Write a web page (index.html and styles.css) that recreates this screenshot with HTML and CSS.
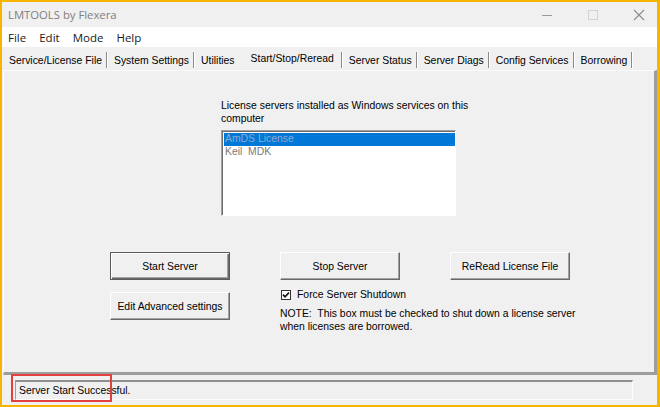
FILE: index.html
```html
<!DOCTYPE html>
<html>
<head>
<meta charset="utf-8">
<title>LMTOOLS by Flexera</title>
<link rel="stylesheet" href="styles.css">
</head>
<body>
<div class="window">
  <div class="titlebar">
    <span class="title">LMTOOLS by Flexera</span>
    <div class="winctl">
      <span class="ctl"><svg width="12" height="12" viewBox="0 0 12 12"><path d="M1 6.5H11" stroke="#9a9a9a" stroke-width="1"/></svg></span>
      <span class="ctl"><svg width="12" height="12" viewBox="0 0 12 12"><rect x="1.5" y="1.5" width="9" height="9" fill="none" stroke="#d2d2d2" stroke-width="1"/></svg></span>
      <span class="ctl"><svg width="12" height="12" viewBox="0 0 12 12"><path d="M1 1L11 11M11 1L1 11" stroke="#8c8c8c" stroke-width="1.1"/></svg></span>
    </div>
  </div>
  <div class="menubar">
    <span>File</span><span>Edit</span><span>Mode</span><span>Help</span>
  </div>
  <div class="tabs">
    <span class="tab">Service/License File</span>
    <span class="tab">System Settings</span>
    <span class="tab nosep">Utilities</span>
    <span class="tab active">Start/Stop/Reread</span>
    <span class="tab">Server Status</span>
    <span class="tab">Server Diags</span>
    <span class="tab">Config Services</span>
    <span class="tab">Borrowing</span>
  </div>
  <div class="panel">
    <div class="list-section">
      <p class="label">License servers installed as Windows services on this<br>computer</p>
      <div class="listbox">
        <div class="item selected">AmDS License</div>
        <div class="item">Keil&nbsp; MDK</div>
      </div>
    </div>
    <div class="actions">
      <button class="btn default">Start Server</button>
      <button class="btn">Stop Server</button>
      <button class="btn">ReRead License File</button>
      <button class="btn edit">Edit Advanced settings</button>
      <div class="force">
        <div class="check">
          <span class="box"><svg width="10" height="10" viewBox="0 0 10 10"><path d="M2 4.6L4 6.8L8 2.6" fill="none" stroke="#111" stroke-width="1.6"/></svg></span>
          <span>Force Server Shutdown</span>
        </div>
        <p class="note">NOTE:&nbsp; This box must be checked to shut down a license server<br>when licenses are borrowed.</p>
      </div>
    </div>
  </div>
  <div class="statusbar">
    <div class="status">Server Start Successful.</div>
    <div class="highlight"></div>
  </div>
</div>
</body>
</html>
```
FILE: styles.css
```css
* { box-sizing: border-box; margin: 0; padding: 0; }
html, body { width: 660px; height: 407px; overflow: hidden; background: #f0f0f0; }
.window {
  width: 660px; height: 407px;
  border: solid #f7b500; border-width: 2px 3px 2px 2px;
  display: flex; flex-direction: column;
  background: #f0f0f0;
  font-family: "Liberation Sans", Arial, sans-serif;
  font-size: 10.4px; color: #000;
}
.titlebar { height: 25px; flex: none; display: flex; align-items: center; padding-left: 6px; background: #f0f0f0; }
.title { font-family: "Open Sans", "Noto Sans", sans-serif; font-size: 11.3px; color: #7f7f7f; }
.winctl { margin-left: auto; display: flex; gap: 22px; padding-right: 6px; align-items: center; }
.ctl { width: 24px; height: 24px; display: flex; align-items: center; justify-content: center; }
.menubar {
  height: 20px; flex: none; background: #fff; display: flex; align-items: center; gap: 13px; padding-left: 6px;
  font-family: "Open Sans", "Noto Sans", sans-serif; font-size: 11.5px; color: #1a1a1a;
}
.tabs { height: 23px; flex: none; display: flex; align-items: flex-start; padding: 5px 0 0 1px; }
.tab {
  height: 16px; display: flex; align-items: center; padding: 0 4px 0 6px;
  border-right: 1px solid #8a8a8a; box-shadow: 1px 0 0 #ffffff; margin-right: 1px; white-space: nowrap;
}
.tab.nosep { border-right-color: transparent; box-shadow: none; }
.tab.active { padding: 0 7px 4px 10px; }
.panel {
  flex: none; height: 305px; margin-left: 1px;
  border: solid; border-width: 1px 3px 3px 1px;
  border-color: #fbfbfb #9d9d9d #9d9d9d #fbfbfb;
  padding-top: 28px;
}
.list-section { margin-left: 217px; }
.label { line-height: 13px; }
.listbox {
  margin-top: 5px; width: 235px; height: 86px; background: #fff;
  border: 1px solid; border-color: #a0a0a0 #ffffff #ffffff #a0a0a0;
  box-shadow: inset 1px 1px 0 #6d6d6d;
  padding: 2px 0 0 2px;
}
.item { height: 13px; line-height: 12px; padding-left: 1px; color: #7a7a7a; }
.item.selected { background: #0078d7; color: #8fa9cf; }
.actions {
  margin: 36px 0 0 106px;
  display: grid; grid-template-columns: 120px 120px 120px; column-gap: 50px; row-gap: 8px;
  grid-template-rows: 28px auto;
}
.btn {
  font: inherit; color: #000; background: #f0f0f0; height: 28px;
  border: 1px solid; border-color: #ffffff #696969 #696969 #ffffff;
  box-shadow: inset -1px -1px 0 #a0a0a0;
}
.btn.default { border-color: #5a5a5a; box-shadow: inset 1px 1px 0 #ffffff, inset -1px -1px 0 #696969, inset -2px -2px 0 #a0a0a0; }
.btn.edit { margin-top: 4px; }
.force { grid-column: 2 / 4; }
.check { display: flex; align-items: center; height: 13px; gap: 6px; padding-left: 1px; }
.box { width: 10px; height: 10px; display: flex; border: 1px solid #333; background: #fff; }
.box svg { margin: -1px; }
.note { margin-top: 7px; line-height: 12.5px; white-space: nowrap; }
.statusbar { flex: 1; position: relative; padding: 5px 0 0 13px; }
.status {
  width: 618px; height: 20px; display: flex; align-items: center; padding-left: 3px;
  border: solid; border-width: 2px 1px 1px 1px; border-color: #8f8f8f #fcfcfc #fcfcfc #a0a0a0;
}
.highlight {
  position: absolute; left: 9px; top: -1px; width: 101px; height: 28px;
  border: 2px solid #e2403f;
}
```
